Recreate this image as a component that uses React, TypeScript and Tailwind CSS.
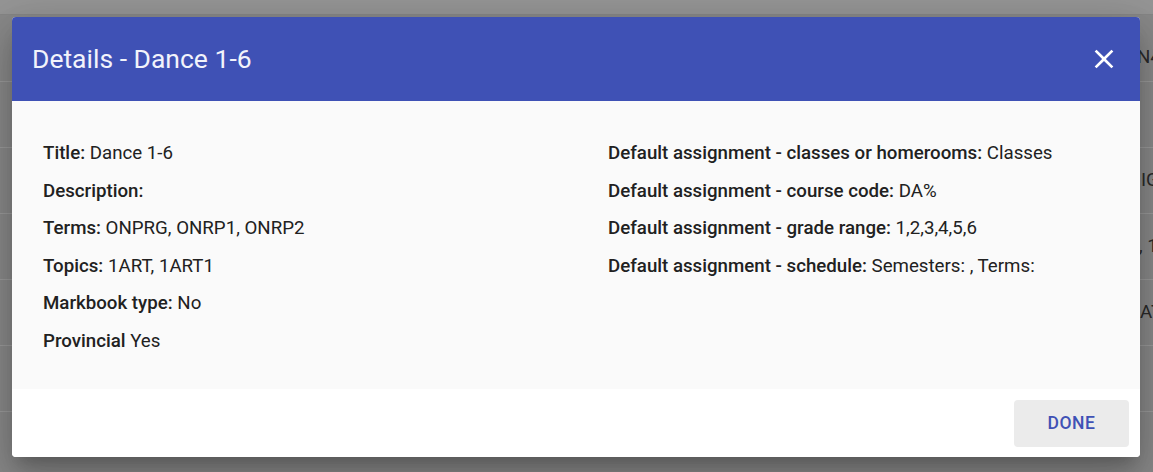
import React from "react";

const left: [string, string][] = [
  ["Title:", "Dance 1-6"],
  ["Description:", ""],
  ["Terms:", "ONPRG, ONRP1, ONRP2"],
  ["Topics:", "1ART, 1ART1"],
  ["Markbook type:", "No"],
  ["Provincial", "Yes"],
];

const right: [string, string][] = [
  ["Default assignment - classes or homerooms:", "Classes"],
  ["Default assignment - course code:", "DA%"],
  ["Default assignment - grade range:", "1,2,3,4,5,6"],
  ["Default assignment - schedule:", "Semesters: , Terms:"],
];

function Row({ label, value }: { label: string; value: string }) {
  return (
    <div className="h-[37.6px] leading-[28px] text-[18.7px] text-[#212121] whitespace-nowrap">
      <span className="font-medium">{label}</span>
      {value ? <span> {value}</span> : null}
    </div>
  );
}

export default function App() {
  return (
    <div
      className="relative w-[1153px] h-[472px] overflow-hidden bg-[#898989]"
      style={{ fontFamily: "Roboto, 'Noto Sans', sans-serif" }}
    >
      {/* background page */}
      <div className="flex flex-col text-[18.7px] text-[#2a2a2a] whitespace-nowrap">
        <div className="h-[15px] bg-[#959595] border-b border-[#868686]" />
        <div className="h-[67px] border-b border-[#9a9a9a] flex items-end pb-[10px] pl-[1137px]">N4</div>
        <div className="h-[66px] border-b border-[#9a9a9a]" />
        <div className="h-[66px] border-b border-[#9a9a9a] flex items-center pl-[1141px]">IG</div>
        <div className="h-[66px] border-b border-[#9a9a9a] flex items-center pl-[1139px]">, 1</div>
        <div className="h-[66px] border-b border-[#9a9a9a] flex items-center pl-[1140px]">AT</div>
        <div className="h-[66px] border-b border-[#9a9a9a]" />
      </div>

      {/* dialog */}
      <div className="absolute left-[12px] top-[17px] w-[1128px] rounded-[4px] overflow-hidden bg-white shadow-[0px_11px_15px_-7px_rgba(0,0,0,0.2),0px_24px_38px_3px_rgba(0,0,0,0.14),0px_9px_46px_8px_rgba(0,0,0,0.12)]">
        <div className="h-[84px] bg-[#3f51b5] flex items-center justify-between pl-[20px] pr-[21px]">
          <div className="text-[26.5px] leading-[34px] text-[#f2f3fb]">Details - Dance 1-6</div>
          <svg width="32" height="32" viewBox="0 0 24 24" fill="#ffffff" className="mr-[-1px]">
            <path d="M19 6.41L17.59 5 12 10.59 6.41 5 5 6.41 10.59 12 5 17.59 6.41 19 12 13.41 17.59 19 19 17.59 13.41 12z" />
          </svg>
        </div>
        <div className="h-[288px] bg-[#fafafa] grid grid-cols-2 pt-[38px]">
          <div className="pl-[31px]">
            {left.map(([l, v]) => (
              <Row key={l} label={l} value={v} />
            ))}
          </div>
          <div className="pl-[32px]">
            {right.map(([l, v]) => (
              <Row key={l} label={l} value={v} />
            ))}
          </div>
        </div>
        <div className="h-[68px] bg-white flex items-start justify-end pt-[11px] pr-[11px]">
          <button className="w-[115px] h-[47px] rounded-[4px] bg-[#ebebeb] text-[#3f51b5] font-medium text-[17.5px] tracking-[0.03em] uppercase">
            Done
          </button>
        </div>
      </div>
    </div>
  );
}
